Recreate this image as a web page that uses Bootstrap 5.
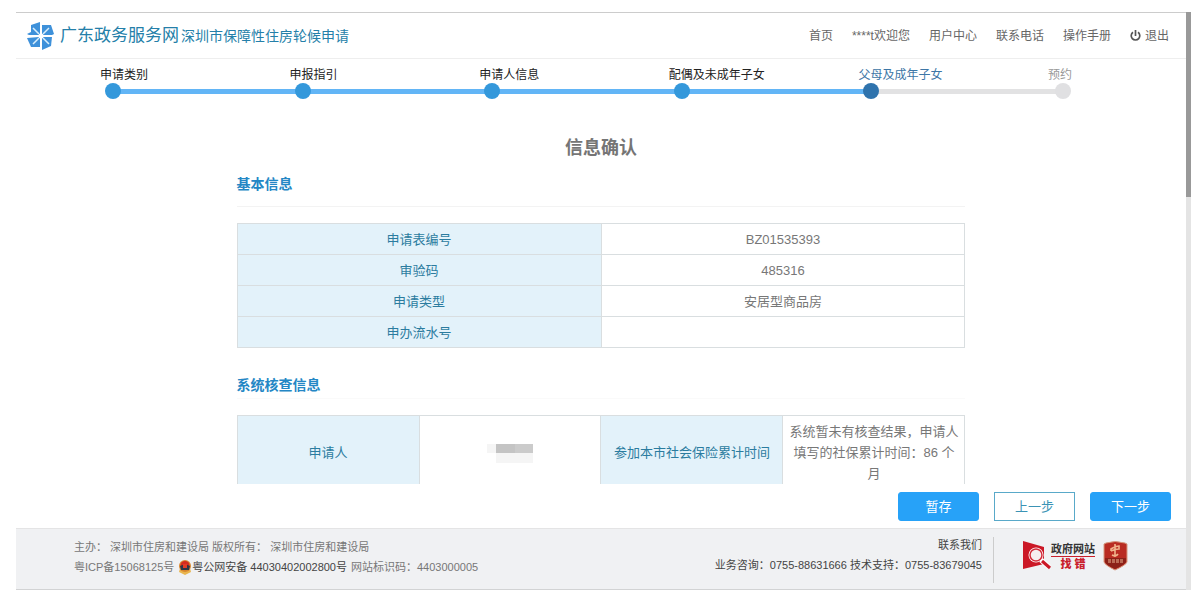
<!DOCTYPE html>
<html lang="zh-CN">
<head>
<meta charset="utf-8">
<meta name="viewport" content="width=device-width, initial-scale=1">
<title>深圳市保障性住房轮候申请</title>
<link href="https://cdn.jsdelivr.net/npm/bootstrap@5.3.0/dist/css/bootstrap.min.css" rel="stylesheet">
<style>
body{font:12px/18px "Liberation Sans","Noto Sans CJK SC",sans-serif;color:#666;background:#fff}
a{color:inherit;text-decoration:none}
.frame{padding:12px 9px 9px 16px}
.pane{border-top:1px solid #ccc}
.track{width:5px;background:#e4e4e4}
.thumb{height:32%;background:#999}
.topbar{height:46px;border-bottom:1px solid #eee;padding:0 17px 0 10px}
.site{font-size:17px;color:#257fa9;line-height:24px}
.subsite{font-size:14px;color:#257fa9;margin-left:2px}
.menu{gap:19px}
.steps{margin:9px 112px 0 84px;line-height:15px}
.step{width:0;color:#222}
.step.last{width:26px;flex:none;color:#999}
.dot{width:16px;height:16px;border-radius:50%;background:#3498db;flex:none;margin-left:5px;z-index:1}
.line{height:5px;background:#62b5f6;margin:0 -8px 0 -1px}
.now{color:#3d76a6}.now .dot{background:#2f73ad}.now .line{background:#e2e2e3}
.last .dot{background:#e0e0e2;margin-left:7px}
.doc{width:62.3%}
.doc h1{font-size:18px;line-height:26px;font-weight:700;color:#757575;margin:36px 0 13px}
.doc h2{font-size:14px;line-height:20px;font-weight:700;color:#2487c5;margin:0;padding-bottom:12px;border-bottom:1px solid #f3f3f3}
.doc h2.second{padding-bottom:3px;border-color:#fafafa}
.info{font-size:13px;line-height:21px;text-align:center;vertical-align:middle;table-layout:fixed;color:#777;margin:16px 0 27px;--bs-table-color:#777;border-color:#d9dee0}
.info>:not(caption)>*>*{padding:5px 4px 4px;color:#777}
.info>tbody>tr>th{background:#e3f2fa;font-weight:400;color:#2b7c9f}
.actions{gap:15px;padding:8px 15px 7px 0}
.actions .btn{width:81px;height:29px;padding:0;font-size:13px;line-height:20px;border-radius:3px}
.solid{background:#27a2f8;border-color:#27a2f8;color:#fff}
.hollow{background:#fff;border-color:#59a9c9;color:#3b93b5}
.actions .hollow{border-radius:0}
.foot{height:62px;background:#f0f1f3;border-top:1px solid #e4e4e5;border-bottom:1px solid #d2d3d4;font-size:11px;line-height:20px;color:#777;padding:0 58px}
.dark{color:#444}
.contact{padding-top:6px}
.badges{border-left:1px solid #ccc;margin:8px 0 6px 11px;padding:4px 0 0 28px;gap:8px}
.find{font-size:11px;line-height:14px;font-weight:700;color:#333}
.find b{color:#c9202b;border-top:1px solid #c9202b}
</style>
</head>
<body>
<div class="frame d-flex vh-100">
 <div class="pane d-flex flex-column flex-grow-1 overflow-hidden">
  <header class="topbar d-flex align-items-center flex-shrink-0">
   <svg width="30" height="30" viewBox="0 0 30 30" class="me-1" aria-hidden="true">
    <g fill="#3e91da"><path d="M5 4 14 1V13L13 14H3L1 13 5 11Z"/><path d="M16 4H25L28 13 26 14H17L16 13Z"/><path d="M17 16H26L25 25 16 29V17Z"/><path d="M1 17 13 16 14 17V26H5Z"/></g>
    <path d="m7 7 6 6m10-6-6 6m6 10-6-6M7 23l6-6" stroke="#d9eefc" stroke-width="1.5"/><circle cx="15" cy="15" r="2.500" fill="#fff"/>
   </svg>
   <a href="#" class="site">广东政务服务网</a><span class="subsite">深圳市保障性住房轮候申请</span>
   <nav class="menu d-flex ms-auto">
    <a href="#">首页</a><a href="#">****t欢迎您</a><a href="#">用户中心</a><a href="#">联系电话</a><a href="#">操作手册</a>
    <a href="#" class="d-flex align-items-center"><svg width="11" height="12" viewBox="0 0 11 12" class="me-1" fill="none" stroke="#555" stroke-width="1.7" aria-hidden="true"><path d="M5.500 0V6M3 2.200A4.300 4.300 0 1 0 8 2.200"/></svg>退出</a>
   </nav>
  </header>
  <div class="steps d-flex text-nowrap flex-shrink-0">
   <div class="step flex-grow-1">申请类别<div class="d-flex align-items-center"><i class="dot"></i><i class="line flex-grow-1"></i></div></div>
   <div class="step flex-grow-1">申报指引<div class="d-flex align-items-center"><i class="dot"></i><i class="line flex-grow-1"></i></div></div>
   <div class="step flex-grow-1">申请人信息<div class="d-flex align-items-center"><i class="dot"></i><i class="line flex-grow-1"></i></div></div>
   <div class="step flex-grow-1">配偶及未成年子女<div class="d-flex align-items-center"><i class="dot"></i><i class="line flex-grow-1"></i></div></div>
   <div class="step flex-grow-1 now">父母及成年子女<div class="d-flex align-items-center"><i class="dot"></i><i class="line flex-grow-1"></i></div></div>
   <div class="step last">预约<div class="d-flex"><i class="dot"></i></div></div>
  </div>
  <main class="flex-grow-1 overflow-hidden">
   <div class="doc mx-auto">
    <h1 class="text-center">信息确认</h1>
    <h2>基本信息</h2>
    <table class="table table-bordered info">
     <tbody>
      <tr><th scope="row">申请表编号</th><td>BZ01535393</td></tr>
      <tr><th scope="row">审验码</th><td>485316</td></tr>
      <tr><th scope="row">申请类型</th><td>安居型商品房</td></tr>
      <tr><th scope="row">申办流水号</th><td></td></tr>
     </tbody>
    </table>
    <h2 class="second">系统核查信息</h2>
    <table class="table table-bordered info">
     <tbody>
      <tr><th scope="row">申请人</th>
       <td><svg width="46" height="19" viewBox="0 0 46 19" role="img" aria-label="已隐藏"><path fill="#f5f5f5" d="M0 0h9v9H0zM9 9h37v10H9z"/><path fill="#c4c4c4" d="M9 0h19v9H9z"/><path fill="#cbcbcb" d="M28 0h18v9H28z"/></svg></td>
       <th scope="row">参加本市社会保险累计时间</th><td>系统暂未有核查结果，申请人填写的社保累计时间：86 个月</td></tr>
     </tbody>
    </table>
   </div>
  </main>
  <div class="actions d-flex justify-content-end flex-shrink-0">
   <button type="button" class="btn solid">暂存</button>
   <button type="button" class="btn hollow">上一步</button>
   <button type="button" class="btn solid">下一步</button>
  </div>
  <footer class="foot d-flex flex-shrink-0 text-nowrap">
   <div class="pt-2">
    <div>主办： 深圳市住房和建设局 版权所有： 深圳市住房和建设局</div>
    <div class="d-flex align-items-center"><span>粤ICP备15068125号</span>
     <svg width="14" height="15" viewBox="0 0 14 15" class="ms-1" aria-hidden="true"><path d="M2 8h10l1 4-6 3-6-3z" fill="#e9b54e"/><circle cx="7" cy="6" r="6" fill="#d9872e"/><circle cx="7" cy="5.500" r="4.500" fill="#d52c20"/><path d="M2 6q5-3 10 0l-1 4H3z" fill="#303746"/><path d="M5 4h4v4H5z" fill="#e23c24"/></svg>
     <a href="#" class="dark">粤公网安备 44030402002800号</a><span class="ms-1">网站标识码：4403000005</span></div>
   </div>
   <div class="contact ms-auto dark text-end">
    <a href="#">联系我们</a>
    <div>业务咨询：0755-88631666 技术支持：0755-83679045</div>
   </div>
   <div class="badges d-flex align-items-start">
    <a href="#" class="d-flex align-items-center">
     <svg width="29" height="30" viewBox="0 0 29 30" aria-hidden="true"><path d="M1 0 22 6V23L1 28Z" fill="#cb1826"/><circle cx="14" cy="14" r="7.500" fill="#fff"/><circle cx="14" cy="14" r="6" fill="#f6eef0" stroke="#d32b39" stroke-width="1.500"/><path d="m19 19 8 7" stroke="#fff" stroke-width="5"/><path d="m20 20 8 7" stroke="#cb1826" stroke-width="3"/></svg>
     <span class="find d-flex flex-column text-center">政府网站<b>找 错</b></span>
    </a>
    <a href="#" aria-label="党政机关"><svg width="25" height="30" viewBox="0 0 25 30" aria-hidden="true"><path d="M3 2Q12-1 22 2l2 1v18q-1 3-12 8Q2 24 1 21V3z" fill="#b92c22" stroke="#d69a80"/><path d="M2 17h21v4q-2 3-11 7Q3 24 2 21z" fill="#8c2118"/><path d="M12 3v13M9 14q4 2 6-1M8 10V8q4-3 8-3v3q-4 0-8 2" stroke="#f0b48c" stroke-width="1.600" fill="none"/><path d="M5 19h3m1 0h3m1 0h3m1 0h3M5 21h3m1 0h3m1 0h3m1 0h3" stroke="#e9b490" stroke-width="1.200"/></svg></a>
   </div>
  </footer>
 </div>
 <div class="track flex-shrink-0" aria-hidden="true"><div class="thumb"></div></div>
</div>
<script src="https://cdn.jsdelivr.net/npm/bootstrap@5.3.0/dist/js/bootstrap.bundle.min.js"></script>
</body>
</html>
